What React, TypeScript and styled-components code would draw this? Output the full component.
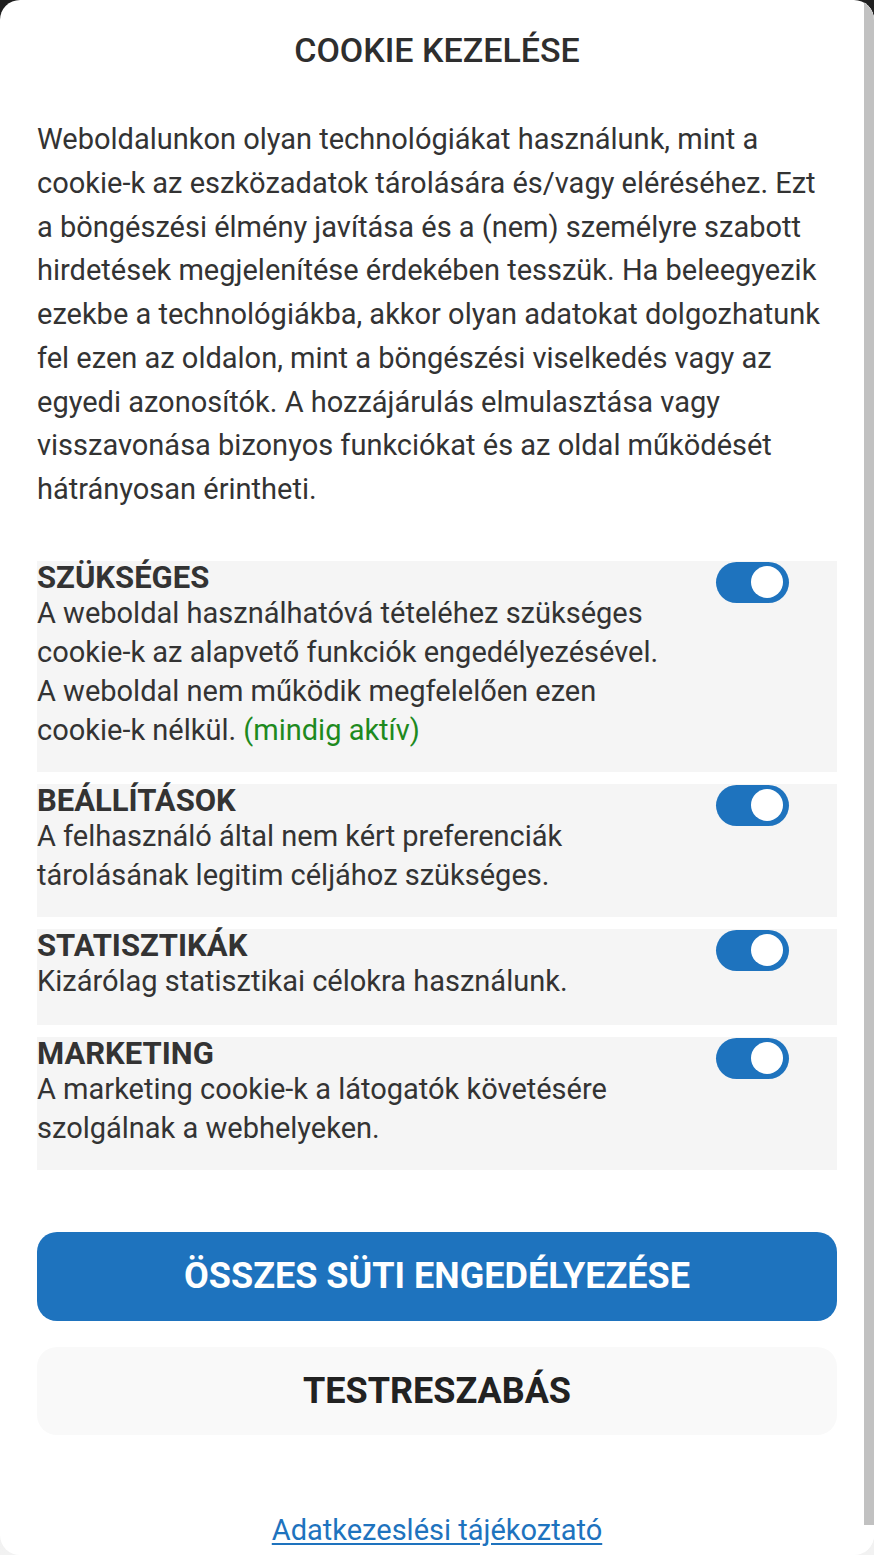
import React from "react";
import styled, { createGlobalStyle } from "styled-components";

const GlobalStyle = createGlobalStyle`
  html, body {
    margin: 0;
    padding: 0;
  }
  body {
    background: linear-gradient(#1f1f1f 0%, #3a3a3a 30%, #e8e8e8 70%, #f2f2f2 100%);
    font-family: Roboto, "Noto Sans", Arial, sans-serif;
    color: #333;
  }
`;

const Modal = styled.div`
  width: 874px;
  height: 1555px;
  background: #fff;
  border-radius: 20px;
  overflow: hidden;
  display: flex;
`;

const Content = styled.div`
  flex: 1;
  min-width: 0;
  padding: 30px 27px 0 37px;
  display: flex;
  flex-direction: column;
`;

const ScrollRail = styled.div`
  flex: none;
  width: 10px;
  background: #fff;
`;

const ScrollThumb = styled.div`
  height: 1525px;
  background: #c1c1c1;
`;

const Title = styled.h2`
  margin: 0;
  text-align: center;
  font-size: 34px;
  line-height: 40px;
  font-weight: 500;
  color: #2e2e2e;
`;

const Intro = styled.p`
  margin: 48px 0 0;
  font-size: 29px;
  line-height: 43.75px;
  color: #333;
`;

const Sections = styled.div`
  margin-top: 49px;
  display: flex;
  flex-direction: column;
  gap: 12px;
`;

const Section = styled.div`
  display: flex;
  align-items: flex-start;
  gap: 41px;
  min-height: 96px;
  box-sizing: border-box;
  background: #f5f5f5;
  padding: 0 48px 22px 0;
`;

const SectionText = styled.div`
  flex: 1;
  min-width: 0;
`;

const SectionTitle = styled.div`
  font-size: 31px;
  line-height: 33px;
  font-weight: 700;
  color: #333;
`;

const SectionBody = styled.div`
  font-size: 29px;
  line-height: 39px;
  color: #333;
`;

const Always = styled.span`
  color: #1e8a1e;
`;

const Toggle = styled.span`
  flex: none;
  margin-top: 1px;
  width: 73px;
  height: 41px;
  box-sizing: border-box;
  border-radius: 21px;
  background: #1e73be;
  display: flex;
  align-items: center;
  justify-content: flex-end;
  padding: 0 6px;
`;

const Knob = styled.span`
  width: 32px;
  height: 32px;
  border-radius: 50%;
  background: #fff;
`;

const Button = styled.button<{ $primary?: boolean }>`
  display: block;
  width: 100%;
  height: ${(p) => (p.$primary ? "89px" : "88px")};
  border: none;
  border-radius: 20px;
  font-family: Roboto, "Noto Sans", Arial, sans-serif;
  font-weight: 700;
  font-size: 36px;
  background: ${(p) => (p.$primary ? "#1e73be" : "#f9f9f9")};
  color: ${(p) => (p.$primary ? "#fff" : "#222")};
  margin-top: ${(p) => (p.$primary ? "62px" : "26px")};
  cursor: pointer;
`;

const LinkRow = styled.div`
  margin-top: 77px;
  text-align: center;
  font-size: 29px;
  line-height: 36px;
`;

const Link = styled.a`
  color: #1e73be;
  text-decoration: underline;
  text-underline-offset: 3px;
`;

const sections = [
  {
    title: "SZÜKSÉGES",
    body: (
      <>
        A weboldal használhatóvá tételéhez szükséges cookie-k az alapvető funkciók engedélyezésével.
        A weboldal nem működik megfelelően ezen cookie-k nélkül. <Always>(mindig aktív)</Always>
      </>
    ),
  },
  {
    title: "BEÁLLÍTÁSOK",
    body: <>A felhasználó által nem kért preferenciák tárolásának legitim céljához szükséges.</>,
  },
  {
    title: "STATISZTIKÁK",
    body: <>Kizárólag statisztikai célokra használunk.</>,
  },
  {
    title: "MARKETING",
    body: <>A marketing cookie-k a látogatók követésére szolgálnak a webhelyeken.</>,
  },
];

export default function App() {
  return (
    <>
      <GlobalStyle />
      <Modal>
        <Content>
          <Title>COOKIE KEZELÉSE</Title>
          <Intro>
            Weboldalunkon olyan technológiákat használunk, mint a cookie-k az eszközadatok
            tárolására és/vagy eléréséhez. Ezt a böngészési élmény javítása és a (nem)
            személyre szabott hirdetések megjelenítése érdekében tesszük. Ha beleegyezik ezekbe a
            technológiákba, akkor olyan adatokat dolgozhatunk fel ezen az oldalon, mint a
            böngészési viselkedés vagy az egyedi azonosítók. A hozzájárulás elmulasztása vagy
            visszavonása bizonyos funkciókat és az oldal működését hátrányosan érintheti.
          </Intro>
          <Sections>
            {sections.map((s) => (
              <Section key={s.title}>
                <SectionText>
                  <SectionTitle>{s.title}</SectionTitle>
                  <SectionBody>{s.body}</SectionBody>
                </SectionText>
                <Toggle>
                  <Knob />
                </Toggle>
              </Section>
            ))}
          </Sections>
          <Button $primary>ÖSSZES SÜTI ENGEDÉLYEZÉSE</Button>
          <Button>TESTRESZABÁS</Button>
          <LinkRow>
            <Link href="#">Adatkezeslési tájékoztató</Link>
          </LinkRow>
        </Content>
        <ScrollRail>
          <ScrollThumb />
        </ScrollRail>
      </Modal>
    </>
  );
}
